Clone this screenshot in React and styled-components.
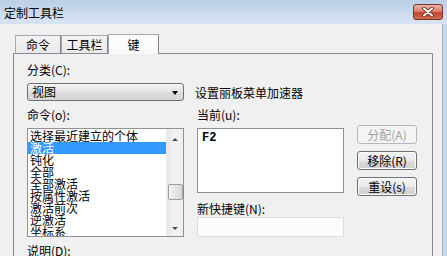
import styled, { createGlobalStyle } from "styled-components";

const GlobalStyle = createGlobalStyle`
  html, body {
    margin: 0;
    padding: 0;
    background: #f0f0f0;
  }
  body {
    width: 447px;
    height: 256px;
    overflow: hidden;
    font-family: "Noto Sans CJK SC", "Noto Sans", sans-serif;
    font-size: 12px;
    color: #000;
  }
`;

const Window = styled.div`
  width: 447px;
  height: 256px;
  display: flex;
  flex-direction: column;
  background: #c8d9ee;
  overflow: hidden;
`;

const TitleBar = styled.div`
  height: 24px;
  flex: none;
  display: flex;
  align-items: center;
  justify-content: space-between;
  padding: 0 4px;
  background: linear-gradient(#bbcfe8, #d7e3f1);
`;

const Title = styled.span`
  font-size: 12px;
  line-height: 14px;
  margin-top: 1px;
`;

const CloseButton = styled.div`
  width: 30px;
  height: 16px;
  box-sizing: border-box;
  border: 1px solid #7a3327;
  border-radius: 3px;
  background: linear-gradient(#eab2a5 0%, #d9826f 45%, #c4432b 55%, #d06a4f 100%);
  display: flex;
  align-items: center;
  justify-content: center;
  margin-top: -1px;
`;

const Client = styled.div`
  flex: 1;
  display: flex;
  flex-direction: column;
  width: 443px;
  background: #f0f0f0;
  border-right: 1px solid #9cb1c9;
  box-sizing: border-box;
  padding-top: 11px;
`;

const TabRow = styled.div`
  display: flex;
  align-items: flex-end;
  margin-left: 15px;
  height: 18px;
  position: relative;
  z-index: 1;
`;

const Tab = styled.div`
  width: ${(p) => p.$w}px;
  height: ${(p) => (p.$active ? 20 : 18)}px;
  margin-bottom: ${(p) => (p.$active ? -1 : 0)}px;
  box-sizing: border-box;
  border: 1px solid #a6a9b0;
  border-right-color: #7f838b;
  border-bottom: none;
  background: ${(p) =>
    p.$active ? "#fbfbfb" : "linear-gradient(#f3f3f3, #e9e9e9)"};
  display: flex;
  align-items: center;
  justify-content: center;
  line-height: 14px;
  padding-top: ${(p) => (p.$active ? 0 : 1)}px;
`;

const Panel = styled.div`
  margin-left: 13px;
  width: 420px;
  flex: 1;
  box-sizing: border-box;
  border: 1px solid #898c95;
  border-bottom: none;
  background: #f0f0f0;
  padding: 9px 0 0 13px;
  display: flex;
  flex-direction: column;
`;

const Label = styled.div`
  height: 13px;
  line-height: 13px;
  white-space: nowrap;
  margin-top: ${(p) => p.$mt || 0}px;
  grid-area: ${(p) => p.$area || "auto"};
`;

const ComboRow = styled.div`
  display: flex;
  align-items: center;
  gap: 11px;
  margin-top: 7px;
`;

const Combo = styled.div`
  width: 157px;
  height: 18px;
  box-sizing: border-box;
  border: 1px solid #707070;
  border-radius: 3px;
  background: linear-gradient(#f4f4f4, #e4e4e4 50%, #dcdcdc 51%, #d6d6d6);
  display: flex;
  align-items: center;
  justify-content: space-between;
  padding: 0 5px 0 4px;
  line-height: 14px;
`;

const DownTriangle = styled.span`
  width: 0;
  height: 0;
  border-left: 3.5px solid transparent;
  border-right: 3.5px solid transparent;
  border-top: 4px solid #000;
  margin-top: 1px;
`;

const MainGrid = styled.div`
  display: grid;
  grid-template-columns: 157px 147px 60px;
  grid-template-rows: 13px auto;
  grid-template-areas:
    "cmdlabel curlabel ."
    "list right buttons";
  column-gap: 13px;
  row-gap: 7px;
  margin-top: 7px;
`;

const ListBox = styled.div`
  grid-area: list;
  height: 109px;
  box-sizing: border-box;
  border: 1px solid #8e9199;
  background: #fff;
  display: flex;
  overflow: hidden;
`;

const ListItems = styled.div`
  flex: 1;
  padding-top: 1px;
  overflow: hidden;
`;

const ListItem = styled.div`
  height: 12px;
  line-height: 12px;
  padding-left: 2px;
  white-space: nowrap;
  background: ${(p) => (p.$selected ? "#3399ff" : "transparent")};
  color: ${(p) => (p.$selected ? "#fff" : "#000")};
`;

const ScrollBar = styled.div`
  width: 16px;
  flex: none;
  background: linear-gradient(90deg, #e6e6e6, #f2f2f2 40%, #f0f0f0);
  display: flex;
  flex-direction: column;
  align-items: center;
  border-left: 1px solid #ececec;
`;

const ArrowBox = styled.div`
  height: 17px;
  width: 100%;
  display: flex;
  align-items: center;
  justify-content: center;
`;

const ArrowUp = styled.span`
  width: 0;
  height: 0;
  border-left: 3.5px solid transparent;
  border-right: 3.5px solid transparent;
  border-bottom: 3px solid #4d4d4d;
  margin-top: 4px;
`;

const ArrowDown = styled.span`
  width: 0;
  height: 0;
  border-left: 3.5px solid transparent;
  border-right: 3.5px solid transparent;
  border-top: 3px solid #4d4d4d;
  margin-top: 2px;
`;

const Thumb = styled.div`
  width: 15px;
  height: 16px;
  box-sizing: border-box;
  border: 1px solid #9c9c9c;
  border-radius: 2px;
  background: linear-gradient(90deg, #f4f4f4, #e6e6e6 50%, #d6d6d6);
  margin-top: 38px;
`;

const Spacer = styled.div`
  flex: 1;
`;

const RightColumn = styled.div`
  grid-area: right;
  display: flex;
  flex-direction: column;
`;

const KeyBox = styled.div`
  height: 65px;
  box-sizing: border-box;
  border: 1px solid #8e9199;
  background: #fff;
  padding: 3px 4px;
  font-family: "Liberation Mono", monospace;
  font-size: 12px;
  font-weight: bold;
  line-height: 13px;
`;

const TextInput = styled.div`
  height: 20px;
  box-sizing: border-box;
  border: 1px solid #dedede;
  background: #fcfcfc;
  margin-top: 2px;
`;

const ButtonColumn = styled.div`
  grid-area: buttons;
  display: flex;
  flex-direction: column;
  gap: 7px;
  margin-top: -3px;
`;

const Button = styled.div`
  width: 60px;
  height: 19px;
  box-sizing: border-box;
  border: 1px solid ${(p) => (p.$disabled ? "#b5b9bc" : "#707070")};
  border-radius: 3px;
  background: ${(p) =>
    p.$disabled
      ? "#f4f4f4"
      : "linear-gradient(#f2f2f2, #ebebeb 50%, #dddddd 51%, #cfcfcf)"};
  color: ${(p) => (p.$disabled ? "#a3a3a3" : "#000")};
  display: flex;
  align-items: center;
  justify-content: center;
  line-height: 14px;
  box-shadow: inset 0 0 0 1px ${(p) => (p.$disabled ? "transparent" : "#fcfcfc")};
`;

const items = [
  "选择最近建立的个体",
  "激活",
  "钝化",
  "全部",
  "全部激活",
  "按属性激活",
  "激活前次",
  "逆激活",
  "坐标系",
];

function CloseIcon() {
  return (
    <svg width="12" height="10" viewBox="0 0 12 10">
      <path
        d="M2 1.5 L10 8.5 M10 1.5 L2 8.5"
        stroke="#5a1d14"
        strokeWidth="3.6"
        strokeLinecap="round"
      />
      <path
        d="M2 1.5 L10 8.5 M10 1.5 L2 8.5"
        stroke="#fff"
        strokeWidth="2"
        strokeLinecap="round"
      />
    </svg>
  );
}

export default function App() {
  return (
    <>
      <GlobalStyle />
      <Window>
        <TitleBar>
          <Title>定制工具栏</Title>
          <CloseButton>
            <CloseIcon />
          </CloseButton>
        </TitleBar>
        <Client>
          <TabRow>
            <Tab $w={46}>命令</Tab>
            <Tab $w={47}>工具栏</Tab>
            <Tab $w={51} $active>
              键
            </Tab>
          </TabRow>
          <Panel>
            <Label>分类(C):</Label>
            <ComboRow>
              <Combo>
                <span>视图</span>
                <DownTriangle />
              </Combo>
              <span>设置丽板菜单加速器</span>
            </ComboRow>
            <MainGrid>
              <Label $area="cmdlabel">命令(o):</Label>
              <Label $area="curlabel">当前(u):</Label>
              <ListBox>
                <ListItems>
                  {items.map((t, i) => (
                    <ListItem key={t} $selected={i === 1}>
                      {t}
                    </ListItem>
                  ))}
                </ListItems>
                <ScrollBar>
                  <ArrowBox>
                    <ArrowUp />
                  </ArrowBox>
                  <Thumb />
                  <Spacer />
                  <ArrowBox>
                    <ArrowDown />
                  </ArrowBox>
                </ScrollBar>
              </ListBox>
              <RightColumn>
                <KeyBox>F2</KeyBox>
                <Label $mt={9}>新快捷键(N):</Label>
                <TextInput />
              </RightColumn>
              <ButtonColumn>
                <Button $disabled>分配(A)</Button>
                <Button>移除(R)</Button>
                <Button>重设(s)</Button>
              </ButtonColumn>
            </MainGrid>
            <Label $mt={7}>说明(D):</Label>
          </Panel>
        </Client>
      </Window>
    </>
  );
}
